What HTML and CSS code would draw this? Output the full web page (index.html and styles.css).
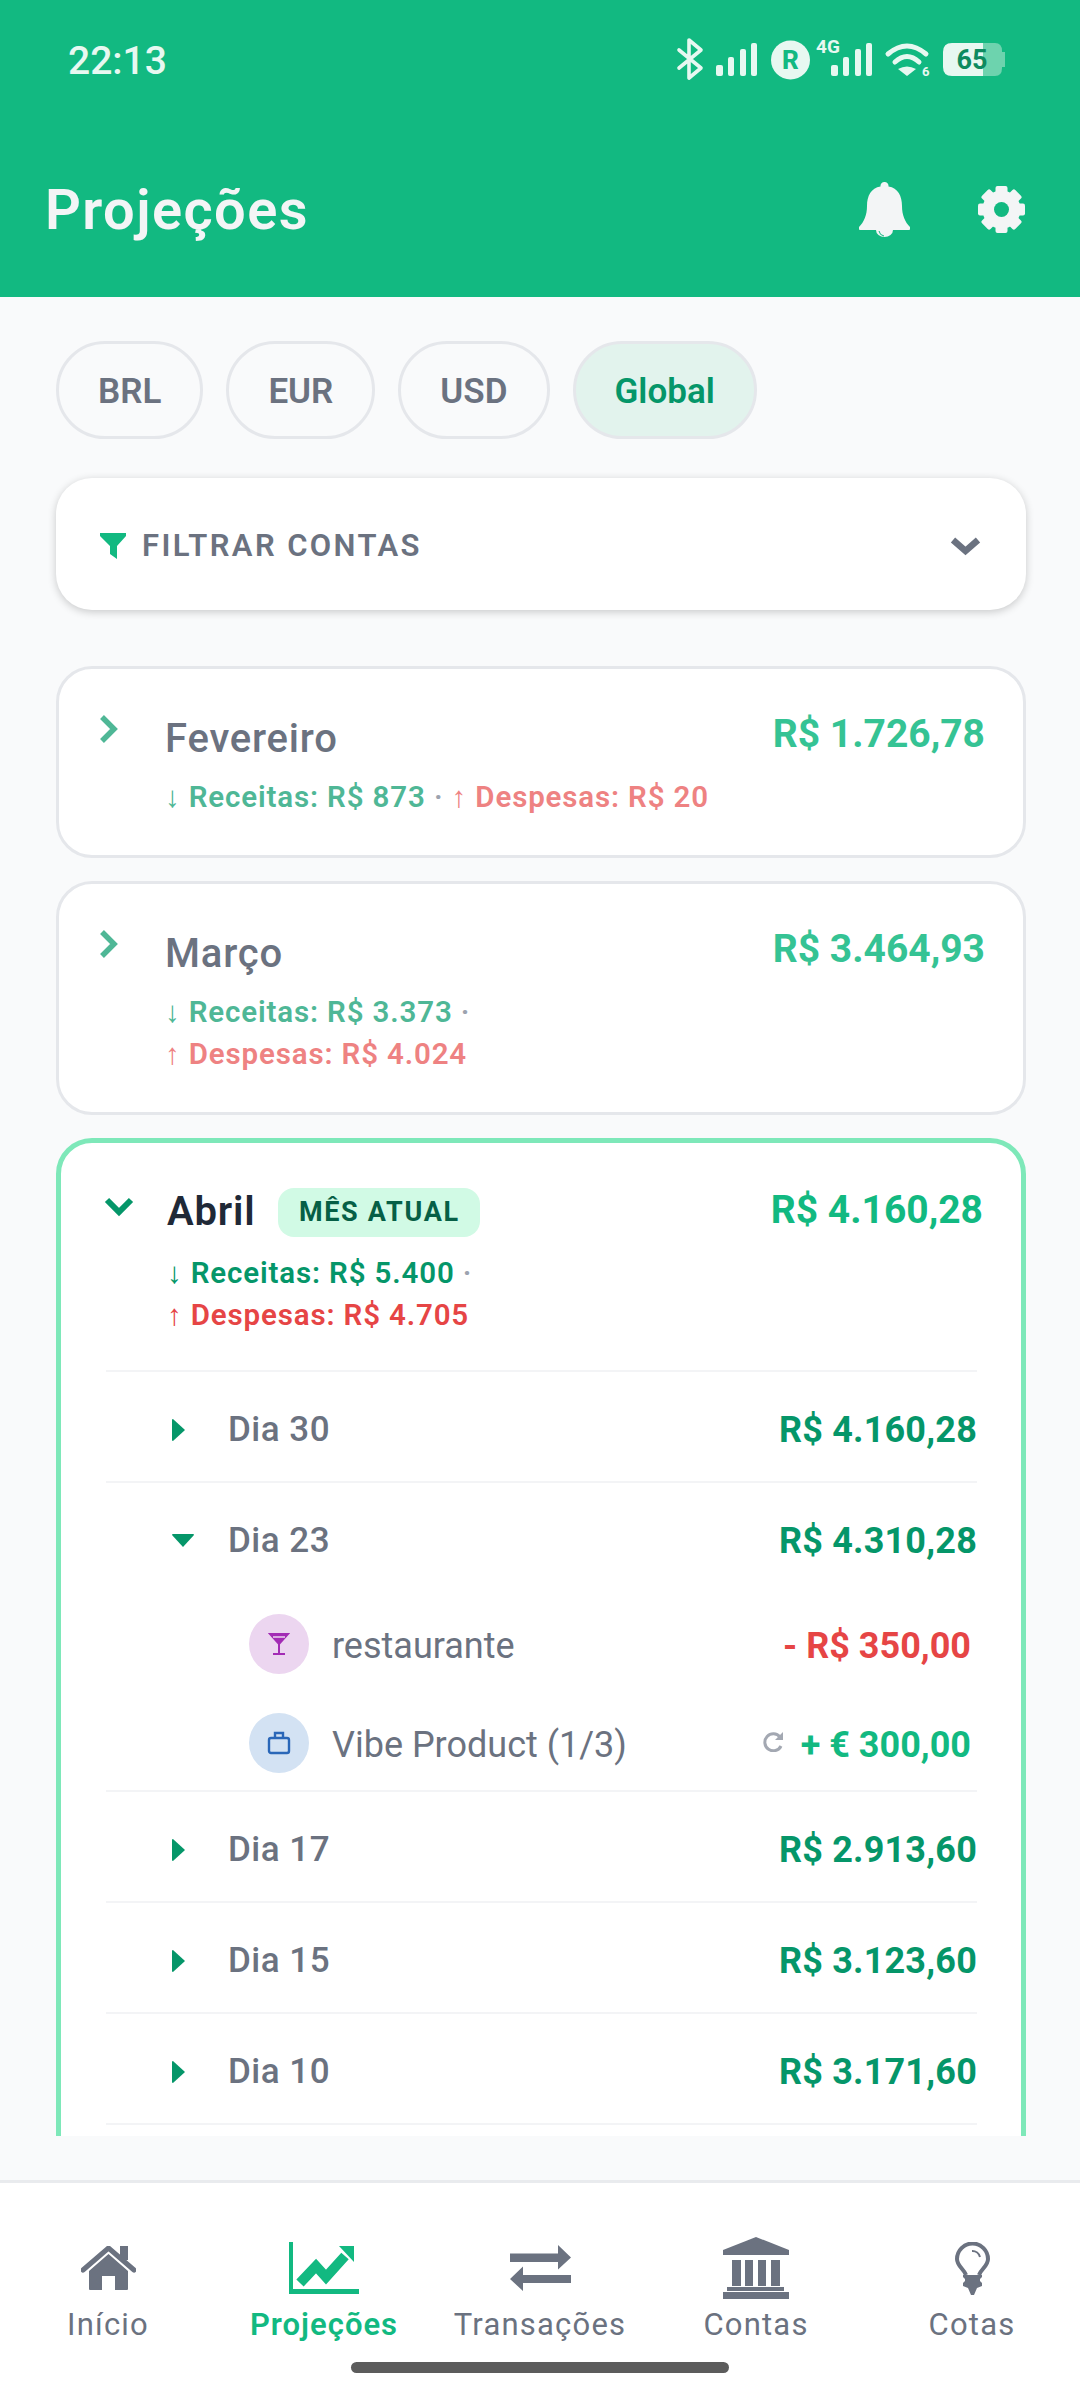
FILE: index.html
```html
<!DOCTYPE html>
<html lang="pt-br">
<head>
    <meta charset="UTF-8">
    <meta name="viewport" content="width=device-width, initial-scale=1.0">
    <title>Projeções</title>
    <link rel="stylesheet" href="styles.css">
</head>
<body>
    <div class="app">
        <header class="topbar">
            <div class="status">
                <span class="status-time">22:13</span>
                <svg class="status-icons" width="332" height="50" viewBox="0 -6 332 50">
                    <path d="M4 10 L26 28 L14 38 V0 L26 10 L4 28" fill="none" stroke="#e7f8f1" stroke-width="3.6" stroke-linejoin="round" stroke-linecap="round"/>
                    <g fill="#e7f8f1">
                        <rect x="41" y="25" width="7" height="11" rx="2"/><rect x="53" y="17" width="6" height="19" rx="2"/><rect x="65" y="9" width="6" height="27" rx="2"/><rect x="76" y="3" width="6" height="33" rx="2"/>
                        <circle cx="115.500" cy="20" r="19.500"/>
                        <rect x="156" y="25" width="7" height="11" rx="2"/><rect x="168" y="17" width="6" height="19" rx="2"/><rect x="180" y="9" width="6" height="27" rx="2"/><rect x="191" y="3" width="6" height="33" rx="2"/>
                        <path d="M232 36 L223 29 Q232 24 241 29 Z"/>
                    </g>
                    <text x="115.500" y="29" class="status-r">R</text>
                    <text x="141" y="13" class="status-4g">4G</text>
                    <path d="M213 14 Q232 -2 251 14 M220 22 Q232 11 244 22" fill="none" stroke="#e7f8f1" stroke-width="5" stroke-linecap="round"/>
                    <text x="247" y="36" class="status-6">6</text>
                    <path d="M308 3 H320 Q327 3 327 11 V12 H330 V27 H327 V28 Q327 36 320 36 H308 Z" fill="#6dd3ae"/>
                    <path d="M308 3 H277 Q268 3 268 12 V27 Q268 36 277 36 H308 Z" fill="#e7f8f1"/>
                    <text x="297" y="29" class="status-batt">65</text>
                </svg>
            </div>
            <div class="topbar-row">
                <h1>Projeções</h1>
                <div class="topbar-actions">
                    <svg width="51" height="55" viewBox="0 0 51 55" fill="#f3f5f6">
                        <path d="M25.5 0a4 4 0 0 1 4 4.5C39 6 43 14 43 24c0 9 3 16 8 21a2 2 0 0 1-1 3H1a2 2 0 0 1-1-3c5-5 8-12 8-21C8 14 12 6 21.500 4.500A4 4 0 0 1 25.500 0z"/>
                        <path d="M17 48h17a8.500 7 0 0 1-17 0z"/>
                        <path d="M20 49a6 6 0 0 0 5 5" fill="none" stroke="#12b981" stroke-width="1"/>
                    </svg>
                    <svg width="47" height="47" viewBox="0 0 47 47" fill="#f3f5f6">
                        <circle cx="23.500" cy="23.500" r="13.500" fill="none" stroke="#f3f5f6" stroke-width="11"/>
                        <rect x="17.500" y="0" width="12" height="47" rx="2"/>
                        <rect x="17.500" y="0" width="12" height="47" rx="2" transform="rotate(45 23.500 23.500)"/>
                        <rect x="17.500" y="0" width="12" height="47" rx="2" transform="rotate(90 23.500 23.500)"/>
                        <rect x="17.500" y="0" width="12" height="47" rx="2" transform="rotate(135 23.500 23.500)"/>
                        <circle cx="23.500" cy="23.500" r="7.500" fill="#12b981"/>
                    </svg>
                </div>
            </div>
        </header>

        <main class="content">
            <div class="scroll">
                <div class="chips">
                    <span class="chip">BRL</span>
                    <span class="chip">EUR</span>
                    <span class="chip">USD</span>
                    <span class="chip chip-active">Global</span>
                </div>

                <div class="filter">
                    <svg width="26" height="26" viewBox="0 0 26 26" fill="#12b981"><path d="M0 0H26V3L17 13V26L10 21V13L0 3z"/></svg>
                    <span class="filter-label">FILTRAR CONTAS</span>
                    <svg class="filter-chevron" width="31" height="20" viewBox="0 0 31 20" fill="none" stroke="#6b7280" stroke-width="6.500"><path d="M3 4L15.500 15L28 4"/></svg>
                </div>

                <section class="month month-past">
                    <div class="month-head">
                        <svg class="month-chevron" width="20" height="30" viewBox="0 0 20 30" fill="none" stroke="#4fb796" stroke-width="5.500"><path d="M3 3L15 15L3 27"/></svg>
                        <div class="month-info">
                            <div class="month-title"><span class="month-name">Fevereiro</span></div>
                            <div class="month-sub"><span class="in">↓ Receitas: R$ 873</span> <span class="dot">·</span> <span class="out">↑ Despesas: R$ 20</span></div>
                        </div>
                        <span class="month-total">R$ 1.726,78</span>
                    </div>
                </section>

                <section class="month month-past">
                    <div class="month-head">
                        <svg class="month-chevron" width="20" height="30" viewBox="0 0 20 30" fill="none" stroke="#4fb796" stroke-width="5.500"><path d="M3 3L15 15L3 27"/></svg>
                        <div class="month-info">
                            <div class="month-title"><span class="month-name">Março</span></div>
                            <div class="month-sub"><span class="in">↓ Receitas: R$ 3.373</span> <span class="dot">·</span><br><span class="out">↑ Despesas: R$ 4.024</span></div>
                        </div>
                        <span class="month-total">R$ 3.464,93</span>
                    </div>
                </section>

                <section class="month month-current">
                    <div class="month-head">
                        <svg class="month-chevron" width="30" height="20" viewBox="0 0 30 20" fill="none" stroke="#059669" stroke-width="6"><path d="M3 3L15 15L27 3"/></svg>
                        <div class="month-info">
                            <div class="month-title">
                                <span class="month-name">Abril</span>
                                <span class="badge">MÊS ATUAL</span>
                            </div>
                            <div class="month-sub"><span class="in">↓ Receitas: R$ 5.400</span> <span class="dot">·</span><br><span class="out">↑ Despesas: R$ 4.705</span></div>
                        </div>
                        <span class="month-total">R$ 4.160,28</span>
                    </div>

                    <div class="days">
                        <div class="day">
                            <div class="day-row">
                                <span class="caret"><svg width="13" height="22" viewBox="0 0 13 22" fill="#059669"><path d="M1 0L13 11L1 22Q0 22 0 21V1Q0 0 1 0z"/></svg></span>
                                <span class="day-name">Dia 30</span>
                                <span class="day-total">R$ 4.160,28</span>
                            </div>
                        </div>
                        <div class="day">
                            <div class="day-row">
                                <span class="caret"><svg width="22" height="13" viewBox="0 0 22 13" fill="#059669"><path d="M0 1Q0 0 1 0H21Q22 0 22 1L11 13z"/></svg></span>
                                <span class="day-name">Dia 23</span>
                                <span class="day-total">R$ 4.310,28</span>
                            </div>
                            <div class="tx">
                                <span class="tx-icon tx-icon-purple">
                                    <svg width="22" height="22" viewBox="0 0 22 22" fill="none" stroke="#a32cb5" stroke-width="2"><path d="M2 1H20L11 11z" fill="#a32cb5"/><path d="M11 11V20M5 21H17"/><path d="M5 4H17" stroke="#ecd6f0" stroke-width="1.500"/></svg>
                                </span>
                                <span class="tx-name">restaurante</span>
                                <span class="tx-amount tx-out">- R$ 350,00</span>
                            </div>
                            <div class="tx">
                                <span class="tx-icon tx-icon-blue">
                                    <svg width="24" height="24" viewBox="0 0 24 24" fill="none" stroke="#2a67b8" stroke-width="2.400"><rect x="2" y="7" width="20" height="15" rx="2"/><path d="M8 7V2H16V7"/></svg>
                                </span>
                                <span class="tx-name">Vibe Product (1/3)</span>
                                <svg class="tx-repeat" width="21" height="21" viewBox="0 0 21 21" fill="none" stroke="#a3a8b2" stroke-width="3"><path d="M17 6A8.500 8.500 0 1 0 18 15"/><path d="M20 1V9H12z" fill="#a3a8b2" stroke="none"/></svg>
                                <span class="tx-amount tx-in">+ € 300,00</span>
                            </div>
                        </div>
                        <div class="day">
                            <div class="day-row">
                                <span class="caret"><svg width="13" height="22" viewBox="0 0 13 22" fill="#059669"><path d="M1 0L13 11L1 22Q0 22 0 21V1Q0 0 1 0z"/></svg></span>
                                <span class="day-name">Dia 17</span>
                                <span class="day-total">R$ 2.913,60</span>
                            </div>
                        </div>
                        <div class="day">
                            <div class="day-row">
                                <span class="caret"><svg width="13" height="22" viewBox="0 0 13 22" fill="#059669"><path d="M1 0L13 11L1 22Q0 22 0 21V1Q0 0 1 0z"/></svg></span>
                                <span class="day-name">Dia 15</span>
                                <span class="day-total">R$ 3.123,60</span>
                            </div>
                        </div>
                        <div class="day">
                            <div class="day-row">
                                <span class="caret"><svg width="13" height="22" viewBox="0 0 13 22" fill="#059669"><path d="M1 0L13 11L1 22Q0 22 0 21V1Q0 0 1 0z"/></svg></span>
                                <span class="day-name">Dia 10</span>
                                <span class="day-total">R$ 3.171,60</span>
                            </div>
                        </div>
                    </div>
                </section>
            </div>
        </main>

        <nav class="tabbar">
            <div class="tabs">
                <div class="tab">
                    <span class="tab-icon">
                        <svg width="55" height="44" viewBox="0 0 55 44" fill="#6b7280">
                            <path d="M27.500 8L47 25V43a1 1 0 0 1-1 1H34V30H21V44H9a1 1 0 0 1-1-1V25z"/>
                            <path d="M2 24L27.500 2L53 24" fill="none" stroke="#6b7280" stroke-width="5" stroke-linecap="round"/>
                            <rect x="39" y="0" width="8" height="14"/>
                        </svg>
                    </span>
                    <span class="tab-label">Início</span>
                </div>
                <div class="tab tab-active">
                    <span class="tab-icon">
                        <svg width="70" height="52" viewBox="0 0 70 52" fill="#12b981">
                            <path d="M0 0H4V47H70V52H0z"/>
                            <polyline points="11,41 27,24 37,35 56,14" fill="none" stroke="#12b981" stroke-width="10"/>
                            <path d="M50 4H65V20z"/>
                        </svg>
                    </span>
                    <span class="tab-label">Projeções</span>
                </div>
                <div class="tab">
                    <span class="tab-icon">
                        <svg width="61" height="46" viewBox="0 0 61 46" fill="#6b7280">
                            <path d="M0 8.500H48V0L61 12.500L48 24.500V17H0z"/>
                            <path d="M61 30H13V21.500L0 34L13 46V38H61z"/>
                        </svg>
                    </span>
                    <span class="tab-label">Transações</span>
                </div>
                <div class="tab">
                    <span class="tab-icon">
                        <svg width="66" height="62" viewBox="0 0 66 62" fill="#6b7280">
                            <path d="M33 0L66 13V18H0V13z"/>
                            <path d="M9 23H18V49H9zM22 23H30V49H22zM35 23H43V49H35zM48 23H57V49H48z"/>
                            <path d="M4 50H61V54H4z"/>
                            <path d="M0 55H66V62H0z"/>
                        </svg>
                    </span>
                    <span class="tab-label">Contas</span>
                </div>
                <div class="tab">
                    <span class="tab-icon">
                        <svg width="35" height="53" viewBox="0 0 35 53" fill="#6b7280">
                            <path d="M11 33C9 27 2 24 2 17A15.500 15.500 0 0 1 33 17C33 24 26 27 24 33" fill="none" stroke="#6b7280" stroke-width="4"/>
                            <path d="M8 33H27V35L25 37V39L27 41V44L22 46L19 53H16L13 46L8 44V41L10 39V37L8 35z"/>
                            <path d="M17 9A8 8 0 0 1 25 15" fill="none" stroke="#6b7280" stroke-width="2"/>
                        </svg>
                    </span>
                    <span class="tab-label">Cotas</span>
                </div>
            </div>
            <div class="home-bar"></div>
        </nav>
    </div>
</body>
</html>
```

FILE: styles.css
```css
* {
    box-sizing: border-box;
}
body {
    margin: 0;
    font-family: Roboto, "Noto Sans", sans-serif;
    background-color: #f9fafb;
}
.app {
    width: 1080px;
    height: 2400px;
    display: flex;
    flex-direction: column;
    overflow: hidden;
}

/* topo */
.topbar {
    height: 297px;
    background-color: #12b981;
    flex-shrink: 0;
}
.status {
    height: 122px;
    padding: 40px 73px 0 68px;
    display: flex;
    justify-content: space-between;
    align-items: flex-start;
}
.status-time {
    font-size: 39px;
    font-weight: 500;
    line-height: 42px;
    color: #e7f8f1;
}
.status-icons {
    flex-shrink: 0;
    margin-top: -6px;
}
.status-r {
    font-size: 26px;
    font-weight: 800;
    fill: #12b981;
    text-anchor: middle;
}
.status-4g {
    font-size: 19px;
    font-weight: 700;
    fill: #e7f8f1;
}
.status-6 {
    font-size: 13px;
    font-weight: 700;
    fill: #e7f8f1;
}
.status-batt {
    font-size: 27px;
    font-weight: 700;
    fill: #0d8a5f;
    text-anchor: middle;
}
.topbar-row {
    height: 175px;
    padding: 0 55px 0 45px;
    display: flex;
    justify-content: space-between;
    align-items: center;
}
h1 {
    margin: 0;
    font-size: 56px;
    font-weight: 600;
    letter-spacing: 1.4px;
    color: #f3f5f6;
}
.topbar-actions {
    display: flex;
    align-items: center;
    gap: 68px;
}

/* conteudo */
.content {
    flex: 1;
    min-height: 0;
    padding-bottom: 44px;
}
.scroll {
    height: 100%;
    overflow: hidden;
    padding: 44px 54px 0 56px;
}
.chips {
    display: flex;
    gap: 23px;
    margin-bottom: 39px;
}
.chip {
    height: 98px;
    padding: 2px 39px 0;
    border: 3px solid #e5e7eb;
    border-radius: 49px;
    display: flex;
    align-items: center;
    font-size: 35px;
    font-weight: 600;
    color: #6b7280;
}
.chip-active {
    background-color: #e2f3ed;
    color: #059669;
}
.filter {
    height: 132px;
    margin-bottom: 56px;
    padding: 3px 44px 0;
    background-color: #fff;
    border-radius: 36px;
    box-shadow: 0 2px 8px rgba(0, 0, 0, 0.2);
    display: flex;
    align-items: center;
    gap: 16px;
}
.filter-label {
    flex: 1;
    font-size: 31px;
    font-weight: 600;
    letter-spacing: 2.4px;
    color: #6b7280;
}
.filter-chevron {
    margin-right: 1px;
}

/* meses */
.month {
    margin-bottom: 23px;
    background-color: #fff;
    border: 3px solid #e5e7eb;
    border-radius: 36px;
    padding: 42px 38px 36px 40px;
}
.month-head {
    display: flex;
    align-items: flex-start;
}
.month-chevron {
    flex-shrink: 0;
    margin-top: 3px;
}
.month-info {
    flex: 1;
    margin-left: 46px;
}
.month-title {
    display: flex;
    align-items: center;
    gap: 23px;
    margin-top: 5px;
}
.month-name {
    font-size: 40px;
    font-weight: 500;
    letter-spacing: 0.8px;
    line-height: 46px;
    color: #6b7280;
}
.month-sub {
    margin-top: 14px;
    font-size: 29.5px;
    font-weight: 600;
    letter-spacing: 0.85px;
    line-height: 42.5px;
}
.month-total {
    font-size: 39px;
    font-weight: 700;
    line-height: 46px;
    color: #35c394;
}
.month-past .in {
    color: #4fb796;
}
.month-past .out {
    color: #ee8282;
}
.dot {
    color: #9ca3af;
}
.month-current {
    height: 1100px;
    margin-bottom: 0;
    border: 5px solid #7ee8b9;
    padding: 45px 0 0 0;
}
.month-current .month-head {
    padding: 0 38px 0 43px;
}
.month-current .month-chevron {
    margin-top: 9px;
}
.month-current .month-info {
    margin-left: 33px;
}
.month-current .month-title {
    margin-top: 0;
}
.month-current .month-name {
    font-weight: 600;
    color: #1f2937;
}
.month-current .month-total {
    color: #12b981;
    margin-top: -1px;
}
.month-current .month-sub {
    margin-top: 15px;
}
.month-current .in {
    color: #059669;
}
.month-current .out {
    color: #e64545;
}
.badge {
    height: 49px;
    padding: 0 20.5px;
    border-radius: 16px;
    background-color: #d1fae5;
    display: flex;
    align-items: center;
    font-size: 27px;
    font-weight: 700;
    letter-spacing: 1.7px;
    color: #065f46;
}

/* dias */
.days {
    margin: 33px 44px 0 45px;
}
.day {
    border-top: 2px solid #f3f4f6;
}
.day:last-child {
    border-bottom: 2px solid #f3f4f6;
}
.day-row {
    height: 109px;
    padding-top: 7px;
    display: flex;
    align-items: center;
}
.caret {
    width: 122px;
    padding-left: 66px;
    display: flex;
    flex-shrink: 0;
}
.day-name {
    flex: 1;
    font-size: 35px;
    font-weight: 500;
    letter-spacing: 0.5px;
    color: #6b7280;
}
.day-total {
    font-size: 36px;
    font-weight: 700;
    letter-spacing: 0.2px;
    color: #059669;
}
.tx {
    height: 99px;
    padding: 6px 6px 0 143px;
    display: flex;
    align-items: center;
}
.tx-icon {
    width: 60px;
    height: 60px;
    border-radius: 30px;
    margin-right: 23px;
    display: flex;
    align-items: center;
    justify-content: center;
    flex-shrink: 0;
}
.tx-icon-purple {
    background-color: #ecd6f0;
}
.tx-icon-blue {
    background-color: #d3e2f3;
}
.tx-name {
    flex: 1;
    padding-top: 3px;
    font-size: 36px;
    font-weight: 400;
    color: #6b7280;
}
.tx-repeat {
    margin-right: 17px;
    margin-top: -4px;
}
.tx-amount {
    padding-top: 3px;
    font-size: 36px;
    font-weight: 700;
}
.tx-out {
    color: #e64545;
}
.tx-in {
    color: #12b981;
}

/* barra inferior */
.tabbar {
    height: 220px;
    flex-shrink: 0;
    background-color: #fff;
    border-top: 3px solid #e9ebee;
}
.tabs {
    display: grid;
    grid-template-columns: repeat(5, 216px);
    padding-top: 54px;
}
.tab {
    display: flex;
    flex-direction: column;
    align-items: center;
}
.tab-icon {
    height: 62px;
    display: flex;
    align-items: center;
}
.tab-label {
    margin-top: 8px;
    font-size: 31px;
    font-weight: 400;
    letter-spacing: 1.2px;
    line-height: 36px;
    color: #6b7280;
}
.tab-active .tab-label {
    font-weight: 600;
    letter-spacing: 1px;
    color: #12b981;
}
.home-bar {
    width: 378px;
    height: 11px;
    margin: 19px auto 0;
    border-radius: 6px;
    background-color: #5c5c5c;
}
```
